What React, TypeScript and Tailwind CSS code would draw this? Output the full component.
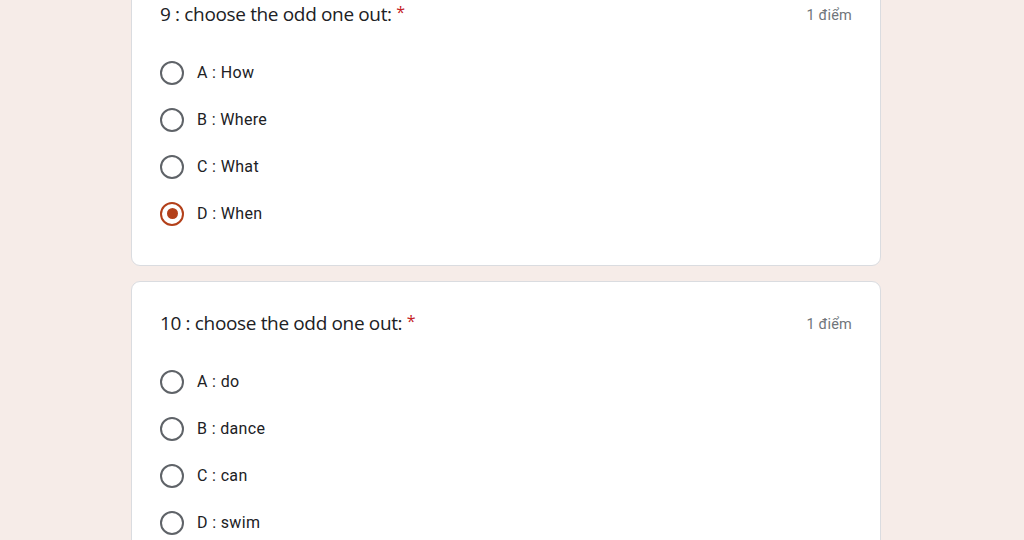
type Question = {
  num: number;
  options: string[];
  selected?: number;
};

const questions: Question[] = [
  { num: 9, options: ['A : How', 'B : Where', 'C : What', 'D : When'], selected: 3 },
  { num: 10, options: ['A : do', 'B : dance', 'C : can', 'D : swim'] },
];

function Radio({ checked }: { checked: boolean }) {
  if (checked) {
    return (
      <span className="flex h-6 w-6 shrink-0 items-center justify-center rounded-full border-2 border-[#b3401a]">
        <span className="h-[11px] w-[11px] rounded-full bg-[#b3401a]" />
      </span>
    );
  }
  return <span className="h-6 w-6 shrink-0 rounded-full border-2 border-[#5f6368]" />;
}

function QuestionCard({ q }: { q: Question }) {
  return (
    <section className="rounded-[9px] border border-[#dadce0] bg-white px-[28px] pt-[29px] pb-[28px]">
      <div className="flex h-6 items-center justify-between">
        <h2 className="text-[19px] leading-6 tracking-[-0.35px] text-[#202124] [font-family:'Open_Sans',sans-serif]">
          {q.num} : choose the odd one out:{' '}
          <span className="relative -top-[3px] text-[16px] text-[#c5221f]">*</span>
        </h2>
        <span className="relative top-[2px] text-[14.5px] leading-6 tracking-[0.2px] text-[#70757a] [font-family:Roboto,sans-serif]">1 điểm</span>
      </div>
      <div className="mt-[23px] flex flex-col">
        {q.options.map((opt, i) => (
          <label key={opt} className="flex h-[47px] items-center gap-[13px]">
            <Radio checked={q.selected === i} />
            <span className="text-[16px] tracking-[0.35px] text-[#202124] [font-family:Roboto,sans-serif]">{opt}</span>
          </label>
        ))}
      </div>
    </section>
  );
}

export default function App() {
  return (
    <div className="h-[540px] w-full overflow-hidden bg-[#f6ece8]">
      <div className="ml-[131px] mt-[-28px] flex w-[750px] flex-col gap-[15px]">
        {questions.map(q => (
          <QuestionCard key={q.num} q={q} />
        ))}
      </div>
    </div>
  );
}
